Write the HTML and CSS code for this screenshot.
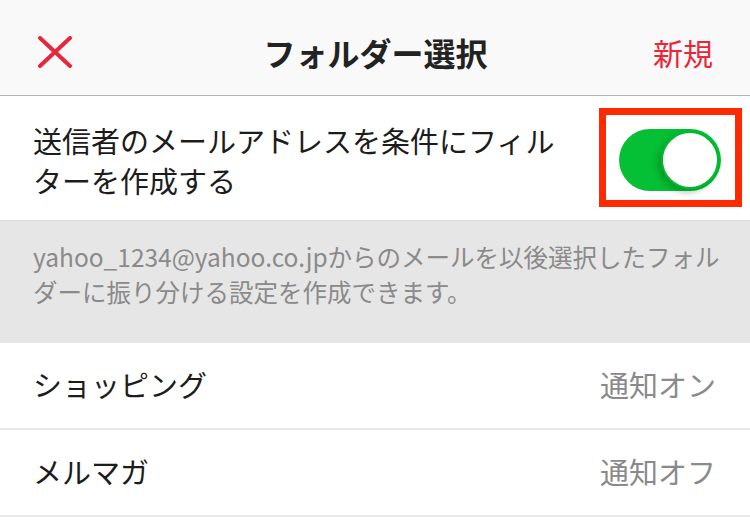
FILE: index.html
```html
<!DOCTYPE html>
<html lang="ja">
<head>
    <meta charset="utf-8" />
    <title>フォルダー選択</title>
    <link rel="stylesheet" href="styles.css">
</head>
<body>

    <div class="header">
        <div class="close-btn">
            <svg width="34" height="32" viewBox="0 0 34 32">
                <line x1="2" y1="2" x2="32" y2="30" stroke="#e8273a" stroke-width="4" stroke-linecap="round" />
                <line x1="32" y1="2" x2="2" y2="30" stroke="#e8273a" stroke-width="4" stroke-linecap="round" />
            </svg>
        </div>
        <h1>フォルダー選択</h1>
        <div class="new-btn">新規</div>
    </div>

    <div class="filter-row">
        <div class="filter-label">送信者のメールアドレスを条件にフィルターを作成する</div>
        <div class="highlight">
            <div class="switch on">
                <span class="knob"></span>
            </div>
        </div>
    </div>

    <div class="note">
        yahoo_1234@yahoo.co.jpからのメールを以後選択したフォルダーに振り分ける設定を作成できます。
    </div>

    <ul class="folder-list">
        <li>
            <span class="folder-name">ショッピング</span>
            <span class="folder-status">通知オン</span>
        </li>
        <li>
            <span class="folder-name">メルマガ</span>
            <span class="folder-status">通知オフ</span>
        </li>
    </ul>

</body>
</html>
```

FILE: styles.css
```css
body {
    margin: 0;
    font-family: "Noto Sans CJK JP", "Noto Sans", sans-serif;
    background-color: #ffffff;
    color: #1c1c1c;
}

.header {
    display: grid;
    grid-template-columns: 1fr auto 1fr;
    align-items: center;
    height: 96px;
    box-sizing: border-box;
    padding: 8px 37px 0 38px;
    background-color: #f9f9f9;
    border-bottom: 1px solid #b3b3b3;
}

.close-btn {
    display: flex;
    align-items: center;
}

h1 {
    margin: 0;
    font-size: 32px;
    font-weight: bold;
    color: #222;
    line-height: 40px;
}

.new-btn {
    justify-self: end;
    font-size: 30px;
    color: #e8273a;
    line-height: 40px;
}

.filter-row {
    display: flex;
    align-items: center;
    justify-content: space-between;
    height: 125px;
    box-sizing: border-box;
    padding: 0 8px 0 33px;
    border-bottom: 1px solid #dadada;
}

.filter-label {
    width: 530px;
    font-size: 29px;
    line-height: 40px;
    padding-top: 3px;
}

.highlight {
    border: 7px solid #ff2a00;
    padding: 14px 14px 9px 13px;
    margin-top: -2px;
}

.switch {
    position: relative;
    width: 102px;
    height: 62px;
    border-radius: 31px;
    background-color: #e4e4e4;
}

    .switch.on {
        background-color: #05bf34;
    }

.knob {
    position: absolute;
    top: 2px;
    right: 2px;
    width: 58px;
    height: 58px;
    box-sizing: border-box;
    border-radius: 50%;
    background-color: #fff;
    border: 2px solid #05b832;
    box-shadow: -3px 3px 6px rgba(0, 80, 20, 0.35);
}

.note {
    background-color: #e6e6e6;
    color: #8a8a8a;
    font-size: 24.5px;
    line-height: 35px;
    height: 122px;
    box-sizing: border-box;
    padding: 18px 8px 0 33px;
}

.folder-list {
    list-style-type: none;
    margin: 0;
    padding: 0;
}

    .folder-list li {
        display: flex;
        justify-content: space-between;
        align-items: center;
        height: 87px;
        box-sizing: border-box;
        padding: 0 34px 4px 33px;
        border-bottom: 2px solid #e7e7ec;
        font-size: 29px;
    }

.folder-status {
    color: #8a8a8a;
}
```
